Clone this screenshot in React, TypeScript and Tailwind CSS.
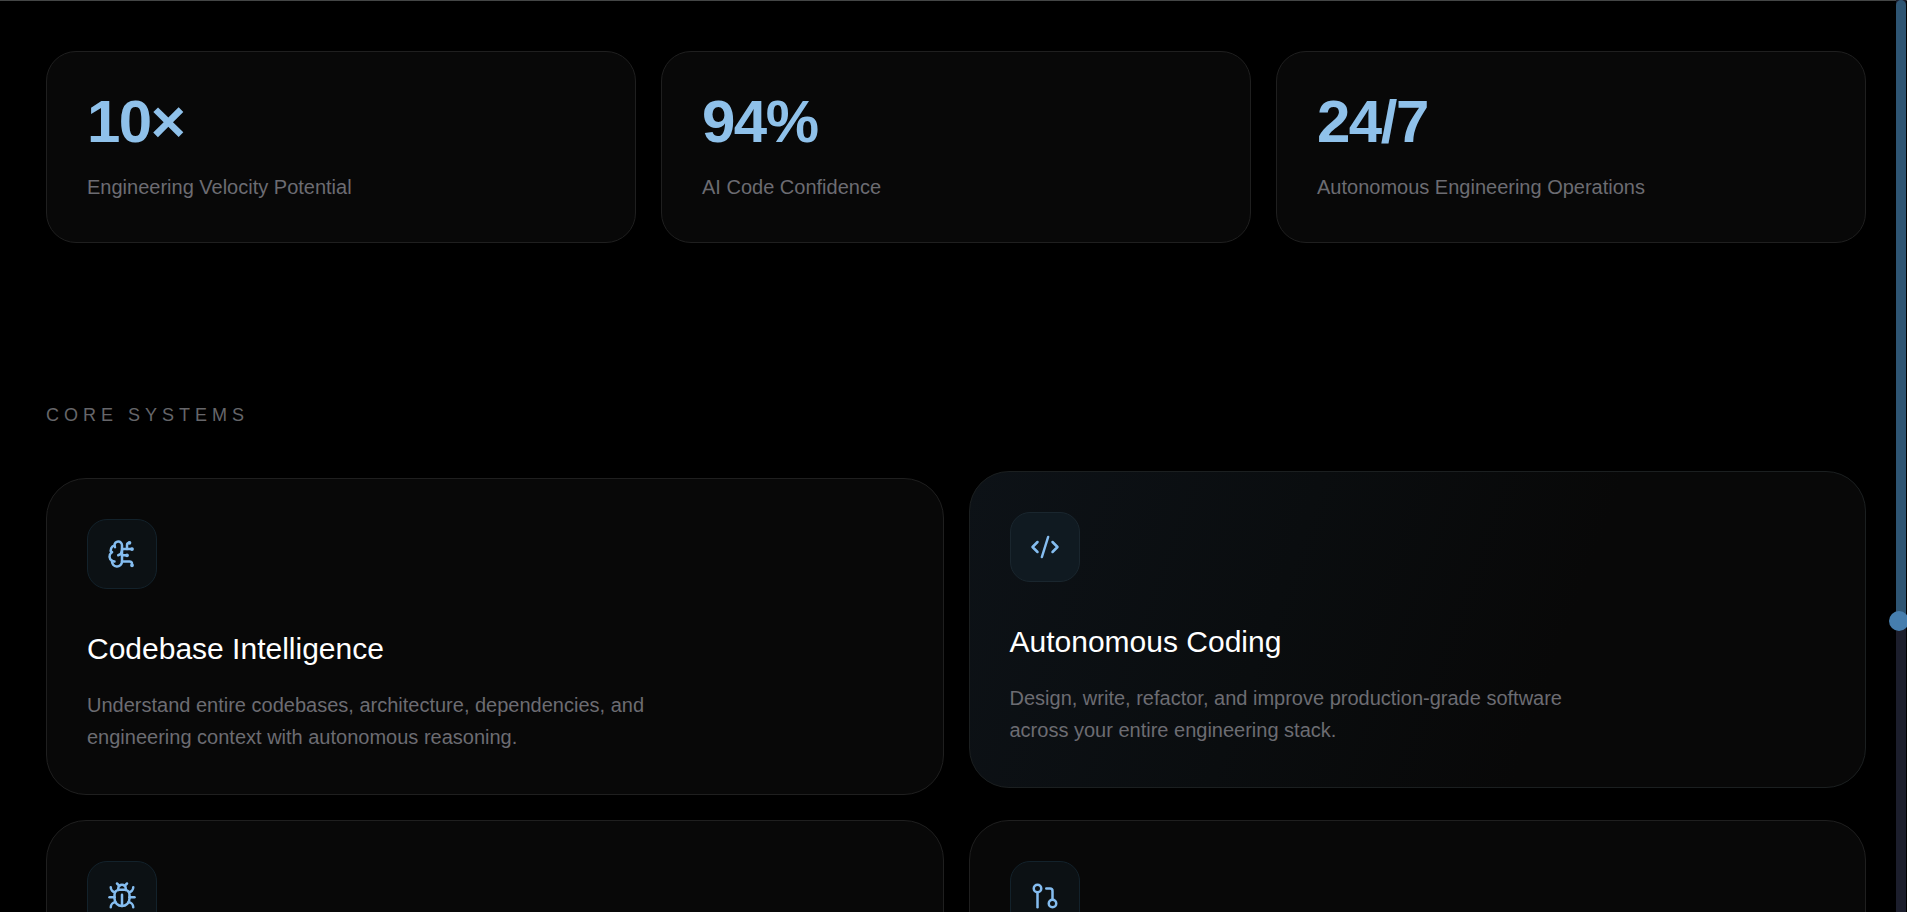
import React from 'react';
import { BrainCircuit, Bug, CodeXml, GitPullRequest, LucideIcon } from 'lucide-react';

interface Stat {
  value: string;
  label: string;
}

interface System {
  id: string;
  icon: LucideIcon;
  title?: string;
  text?: string;
  active?: boolean;
}

const stats: Stat[] = [
  { value: '10×', label: 'Engineering Velocity Potential' },
  { value: '94%', label: 'AI Code Confidence' },
  { value: '24/7', label: 'Autonomous Engineering Operations' },
];

const systems: System[] = [
  {
    id: 'codebase',
    icon: BrainCircuit,
    title: 'Codebase Intelligence',
    text: 'Understand entire codebases, architecture, dependencies, and engineering context with autonomous reasoning.',
  },
  {
    id: 'coding',
    icon: CodeXml,
    title: 'Autonomous Coding',
    text: 'Design, write, refactor, and improve production-grade software across your entire engineering stack.',
    active: true,
  },
  { id: 'bugs', icon: Bug },
  { id: 'pull-requests', icon: GitPullRequest },
];

const StatCard: React.FC<Stat> = ({ value, label }) => (
  <div className="rounded-[30px] border border-[#1f1f1f] bg-[#080808] p-10">
    <div className="text-6xl leading-none font-bold tracking-tight text-[#8fc1ea]">{value}</div>
    <div className="mt-5 text-[20px] leading-[30px] text-[#6c6c72]">{label}</div>
  </div>
);

const SystemCard: React.FC<{ system: System }> = ({ system }) => {
  const Icon = system.icon;

  return (
    <article
      className={`min-h-[317px] rounded-[40px] border p-10 ${
        system.active
          ? '-translate-y-[7px] border-[#1b1f20] bg-[#080808] bg-linear-[110deg] from-[#0d1217] via-[#0a0d0f] via-35% to-[#080808] to-65%'
          : 'border-[#1f1f1f] bg-[#080808]'
      }`}
    >
      <div
        className={`flex size-[70px] items-center justify-center rounded-[20px] border ${
          system.active ? 'border-[#1a262e] bg-[#101a21]' : 'border-[#13222b] bg-[#0c1114]'
        }`}
      >
        <Icon size={30} className="text-[#85bdf0]" />
      </div>
      {system.title && (
        <h3 className="mt-10 text-[30px] leading-10 text-white">{system.title}</h3>
      )}
      {system.text && (
        <p className="mt-5 max-w-[576px] text-[20px] leading-8 text-[#6c6c72]">{system.text}</p>
      )}
    </article>
  );
};

// Scroll position, pinned to the right edge
const ScrollRail: React.FC<{ progress: number }> = ({ progress }) => (
  <div className="fixed top-0 right-px bottom-0 w-[10px] bg-[#1c1e2c]">
    <div className="relative w-full rounded-t-full bg-[#2e5573]" style={{ height: `${progress}%` }}>
      <span className="absolute -bottom-[10px] -left-[7px] size-5 rounded-full bg-[#467eae]" />
    </div>
  </div>
);

export default function App() {
  return (
    <div className="h-screen overflow-hidden border-t border-[#444646] bg-black font-['Liberation_Sans',Arial,sans-serif]">
      <main className="pt-[50px] pr-[41px] pl-[46px]">
        <section className="grid grid-cols-3 gap-[25px]">
          {stats.map((stat) => (
            <StatCard key={stat.label} {...stat} />
          ))}
        </section>

        <section className="pt-40">
          <h2 className="mb-[51px] text-[18px] leading-6 tracking-[5px] text-[#66666a] uppercase">
            Core Systems
          </h2>
          <div className="grid grid-cols-2 gap-[25px]">
            {systems.map((system) => (
              <SystemCard key={system.id} system={system} />
            ))}
          </div>
        </section>
      </main>
      <ScrollRail progress={68.1} />
    </div>
  );
}
